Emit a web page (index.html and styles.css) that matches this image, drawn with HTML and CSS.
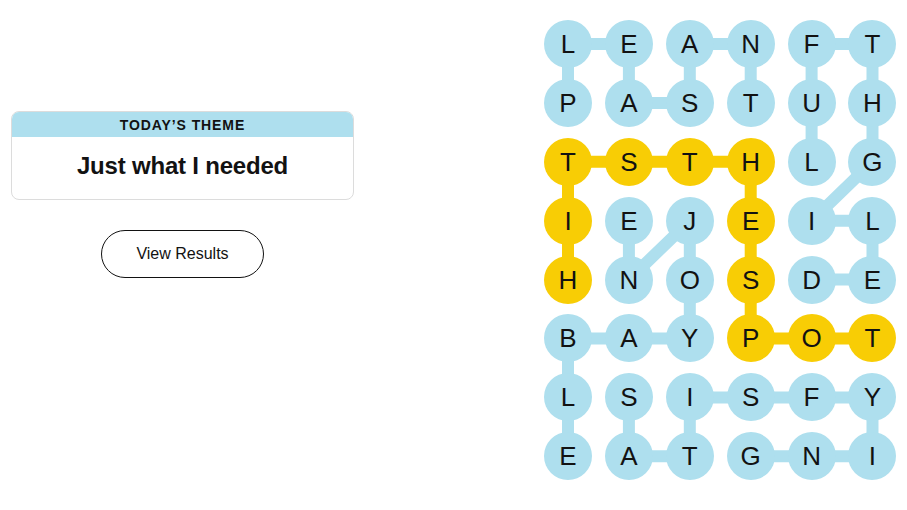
FILE: index.html
```html
<!DOCTYPE html>
<html lang="en">
<head>
  <meta charset="UTF-8" />
  <title>Strands</title>
  <link rel="stylesheet" href="styles.css">
</head>
<body>
  <main class="game">
    <section class="sidebar">
      <div class="theme-card">
        <div class="theme-label">Today’s theme</div>
        <div class="theme-title">Just what I needed</div>
      </div>
      <button type="button" class="results-btn">View Results</button>
    </section>

    <section class="board">
      <!-- paths between letters of found words -->
      <svg class="links" viewBox="0 0 352.5 460.3" aria-hidden="true">
        <g class="word">
          <polyline points="24,82.9 24,24 84.9,24 84.9,82.9 145.8,82.9 145.8,24 206.7,24 206.7,82.9" />
          <polyline points="267.6,259.6 328.5,259.6 328.5,200.7 267.6,200.7 328.5,141.8 328.5,82.9 328.5,24 267.6,24 267.6,82.9 267.6,141.8" />
          <polyline points="84.9,200.7 84.9,259.6 145.8,200.7 145.8,259.6 145.8,318.5 84.9,318.5 24,318.5 24,377.4 24,436.3" />
          <polyline points="84.9,377.4 84.9,436.3 145.8,436.3 145.8,377.4 206.7,377.4 267.6,377.4 328.5,377.4 328.5,436.3 267.6,436.3 206.7,436.3" />
        </g>
        <g class="spangram">
          <polyline points="24,259.6 24,200.7 24,141.8 84.9,141.8 145.8,141.8 206.7,141.8 206.7,200.7 206.7,259.6 206.7,318.5 267.6,318.5 328.5,318.5" />
        </g>
      </svg>

      <div class="cells">
        <div class="cell">L</div><div class="cell">E</div><div class="cell">A</div><div class="cell">N</div><div class="cell">F</div><div class="cell">T</div>
        <div class="cell">P</div><div class="cell">A</div><div class="cell">S</div><div class="cell">T</div><div class="cell">U</div><div class="cell">H</div>
        <div class="cell span">T</div><div class="cell span">S</div><div class="cell span">T</div><div class="cell span">H</div><div class="cell">L</div><div class="cell">G</div>
        <div class="cell span">I</div><div class="cell">E</div><div class="cell">J</div><div class="cell span">E</div><div class="cell">I</div><div class="cell">L</div>
        <div class="cell span">H</div><div class="cell">N</div><div class="cell">O</div><div class="cell span">S</div><div class="cell">D</div><div class="cell">E</div>
        <div class="cell">B</div><div class="cell">A</div><div class="cell">Y</div><div class="cell span">P</div><div class="cell span">O</div><div class="cell span">T</div>
        <div class="cell">L</div><div class="cell">S</div><div class="cell">I</div><div class="cell">S</div><div class="cell">F</div><div class="cell">Y</div>
        <div class="cell">E</div><div class="cell">A</div><div class="cell">T</div><div class="cell">G</div><div class="cell">N</div><div class="cell">I</div>
      </div>
    </section>
  </main>
</body>
</html>
```

FILE: styles.css
```css
body {
  margin: 0;
  background: #fff;
  color: #121212;
  font-family: 'Liberation Sans', Arial, sans-serif;
}
.game {
  display: flex;
  justify-content: space-between;
  align-items: flex-start;
  padding: 20px 10.5px 0 11px;
}
.sidebar {
  width: 343px;
  margin-top: 91px;
  display: flex;
  flex-direction: column;
  align-items: center;
}
.theme-card {
  width: 100%;
  box-sizing: border-box;
  border: 1px solid #dcdcdc;
  border-radius: 8px;
  overflow: hidden;
  text-align: center;
}
.theme-label {
  background: #aedfee;
  height: 25px;
  line-height: 26px;
  font-size: 14px;
  font-weight: 600;
  letter-spacing: 0.9px;
  text-transform: uppercase;
}
.theme-title {
  height: 62px;
  line-height: 58px;
  font-size: 24px;
  font-weight: 700;
  letter-spacing: -0.2px;
}
.results-btn {
  margin-top: 30px;
  width: 163px;
  height: 48px;
  border: 1px solid #121212;
  border-radius: 24px;
  background: #fff;
  color: #121212;
  font-family: inherit;
  font-size: 16px;
  cursor: pointer;
}
.board {
  position: relative;
  width: 352.5px;
  height: 460.3px;
}
.links {
  position: absolute;
  top: 0;
  left: 0;
  width: 100%;
  height: 100%;
}
.links polyline {
  fill: none;
  stroke-width: 12;
  stroke-linejoin: round;
}
.links .word polyline {
  stroke: #aedfee;
}
.links .spangram polyline {
  stroke: #f8cd05;
}
.cells {
  position: relative;
  display: grid;
  grid-template-columns: repeat(6, 48px);
  grid-auto-rows: 48px;
  column-gap: 12.9px;
  row-gap: 10.9px;
}
.cell {
  width: 48px;
  height: 48px;
  border-radius: 50%;
  background: #aedfee;
  text-align: center;
  line-height: 48px;
  font-size: 26px;
}
.cell.span {
  background: #f8cd05;
}
```
